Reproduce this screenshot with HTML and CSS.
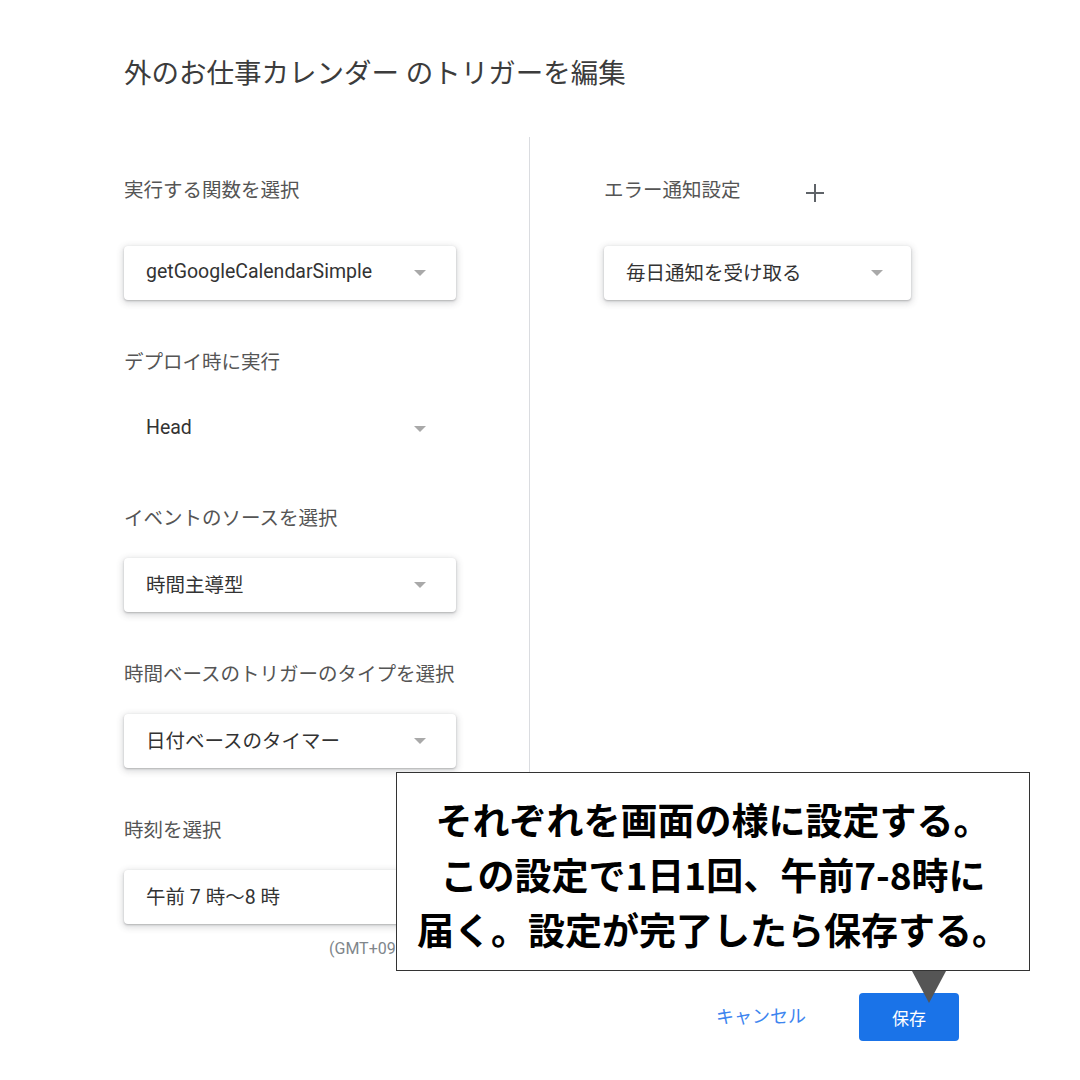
FILE: index.html
```html
<!DOCTYPE html>
<html lang="ja">
<head>
<meta charset="utf-8">
<title>トリガーを編集</title>
<link rel="stylesheet" href="styles.css">
</head>
<body>
<div class="page">
  <h1 class="title">外のお仕事カレンダー のトリガーを編集</h1>
  <div class="columns">
    <div class="col-left">
      <div class="field first">
        <div class="label">実行する関数を選択</div>
        <div class="select raised"><span>getGoogleCalendarSimple</span><i class="caret"></i></div>
      </div>
      <div class="field">
        <div class="label">デプロイ時に実行</div>
        <div class="select"><span>Head</span><i class="caret"></i></div>
      </div>
      <div class="field">
        <div class="label">イベントのソースを選択</div>
        <div class="select raised"><span>時間主導型</span><i class="caret"></i></div>
      </div>
      <div class="field">
        <div class="label">時間ベースのトリガーのタイプを選択</div>
        <div class="select raised"><span>日付ベースのタイマー</span><i class="caret"></i></div>
      </div>
      <div class="field">
        <div class="label">時刻を選択</div>
        <div class="select raised"><span>午前 7 時〜8 時</span><i class="caret"></i></div>
      </div>
      <div class="tz">(GMT+09:00) 日本標準時</div>
    </div>
    <div class="col-right">
      <div class="label-row">
        <div class="label">エラー通知設定</div>
        <svg class="plus" width="20" height="20" viewBox="0 0 20 20"><path d="M10 1v18M1 10h18" stroke="#5f6368" stroke-width="2" fill="none"/></svg>
      </div>
      <div class="select raised narrow"><span>毎日通知を受け取る</span><i class="caret"></i></div>
    </div>
  </div>
  <div class="footer">
    <span class="cancel">キャンセル</span>
    <span class="save">保存</span>
  </div>
</div>
<div class="callout">
  <p>それぞれを画面の様に設定する。</p>
  <p>この設定で1日1回、午前7-8時に</p>
  <p>届く。設定が完了したら保存する。</p>
</div>
<div class="pointer"></div>
</body>
</html>
```
FILE: styles.css
```css
html, body {
  margin: 0;
  padding: 0;
  background: #ffffff;
}
body {
  width: 1080px;
  height: 1080px;
  overflow: hidden;
  position: relative;
  font-family: "Roboto", "Noto Sans CJK JP", sans-serif;
  color: #333333;
}
.page {
  padding: 56px 0 0 124px;
}
.title {
  margin: 0;
  font-size: 27.5px;
  font-weight: 400;
  line-height: 36px;
  color: #3c3c3c;
}
.columns {
  display: flex;
  margin-top: 45px;
}
.col-left {
  width: 405px;
  padding-top: 40px;
}
.label {
  font-size: 19.5px;
  line-height: 28px;
  color: #555555;
}
.field + .field {
  margin-top: 49px;
}
.select {
  display: flex;
  align-items: center;
  justify-content: space-between;
  box-sizing: border-box;
  width: 332px;
  height: 54px;
  margin-top: 25px;
  padding: 0 30px 3px 22px;
  font-size: 19.5px;
  color: #333333;
  border-radius: 4px;
  background: #ffffff;
}
.select .caret {
  margin-top: 3px;
}
.field.first .select {
  margin-top: 41px;
}
.select.raised {
  box-shadow: 0 1px 2px rgba(60, 64, 67, 0.3), 0 2px 6px 2px rgba(60, 64, 67, 0.16);
}
.select.narrow {
  width: 307px;
  margin-top: 41px;
  padding-right: 28px;
}
.caret {
  display: block;
  width: 0;
  height: 0;
  border-left: 6px solid transparent;
  border-right: 6px solid transparent;
  border-top: 6px solid #a9a9a9;
}
.tz {
  margin-top: 15px;
  padding-left: 205px;
  font-size: 16px;
  line-height: 20px;
  color: #80868b;
  white-space: nowrap;
}
.col-right {
  border-left: 1px solid #dadce0;
  padding: 40px 0 0 74px;
}
.label-row {
  display: flex;
  align-items: center;
}
.plus {
  margin-left: 64px;
  margin-top: 4px;
}
.footer {
  display: flex;
  justify-content: flex-end;
  align-items: center;
  margin-top: 34px;
  padding-right: 121px;
}
.cancel {
  font-size: 18px;
  line-height: 48px;
  color: #3d85ef;
  margin-right: 53px;
}
.save {
  display: flex;
  align-items: center;
  justify-content: center;
  width: 100px;
  height: 48px;
  border-radius: 4px;
  background: #1a73e8;
  color: #ffffff;
  font-size: 17px;
}
.callout {
  position: absolute;
  left: 396px;
  top: 772px;
  width: 634px;
  height: 199px;
  box-sizing: border-box;
  border: 1px solid #333333;
  background: #ffffff;
  padding-top: 19px;
  font-family: "Noto Sans CJK JP", sans-serif;
  font-weight: 700;
  font-size: 37px;
  line-height: 55px;
  color: #000000;
  text-align: center;
}
.callout p {
  margin: 0;
  white-space: nowrap;
}
.pointer {
  position: absolute;
  left: 912px;
  top: 971px;
  width: 0;
  height: 0;
  border-left: 17.5px solid transparent;
  border-right: 17.5px solid transparent;
  border-top: 32px solid #555555;
}
```
